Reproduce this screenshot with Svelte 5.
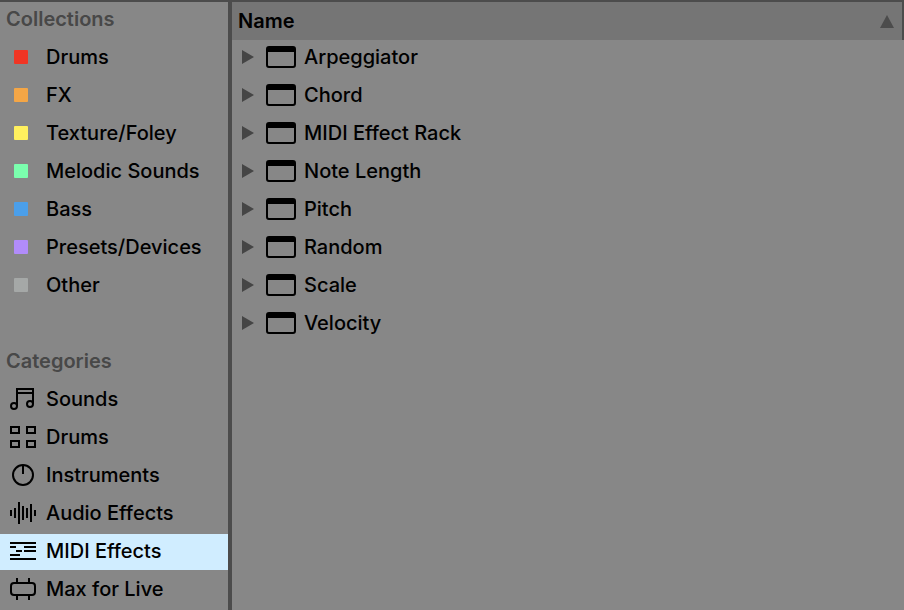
<script lang="ts">
  type Collection = { name: string; color: string };
  type Category = { name: string; shape: string };

  const collections: Collection[] = [
    { name: 'Drums', color: '#f03524' },
    { name: 'FX', color: '#f4a646' },
    { name: 'Texture/Foley', color: '#fff05e' },
    { name: 'Melodic Sounds', color: '#7bffae' },
    { name: 'Bass', color: '#4b9fea' },
    { name: 'Presets/Devices', color: '#b18cfa' },
    { name: 'Other', color: '#a5a8a7' }
  ];

  // stroke paths on a 26x24 grid
  const categories: Category[] = [
    {
      name: 'Sounds',
      shape: 'M7 19V2H23V17M7 6H23M7 19a3 3 0 1 1-6 0a3 3 0 1 1 6 0M23 17a3 3 0 1 1-6 0a3 3 0 1 1 6 0'
    },
    { name: 'Drums', shape: 'M1 2h8v6h-8zM17 2h8v6h-8zM1 16h8v6h-8zM17 16h8v6h-8z' },
    { name: 'Instruments', shape: 'M23 12a10 10 0 1 1-20 0a10 10 0 1 1 20 0M13 2V11' },
    { name: 'Audio Effects', shape: 'M1 9v6M5 7v10M9 1v22M13 5v14M17 7v10M21 3v18M25 9v6' },
    { name: 'MIDI Effects', shape: 'M0 4H26M0 8H6M14 8H26M6 12H12M14 12H26M0 16H10M0 20H26' },
    {
      name: 'Max for Live',
      shape: 'M4 6H22a3 3 0 0 1 3 3v6a3 3 0 0 1-3 3H4a3 3 0 0 1-3-3V9a3 3 0 0 1 3-3zM7 1v5M19 1v5M7 18v5M19 18v5'
    }
  ];

  const devices = [
    'Arpeggiator',
    'Chord',
    'MIDI Effect Rack',
    'Note Length',
    'Pitch',
    'Random',
    'Scale',
    'Velocity'
  ];

  let selected = $state('category-MIDI Effects');
  let ascending = $state(true);

  const sorted = $derived(ascending ? devices : [...devices].reverse());
</script>

<div class="browser">
  <nav class="sidebar">
    <section>
      <h2>Collections</h2>
      {#each collections as item}
        <button
          class="row"
          class:selected={selected === `collection-${item.name}`}
          onclick={() => (selected = `collection-${item.name}`)}
        >
          <span class="icon"><span class="swatch" style="background: {item.color}"></span></span>
          {item.name}
        </button>
      {/each}
    </section>

    <section>
      <h2>Categories</h2>
      {#each categories as item}
        <button
          class="row"
          class:selected={selected === `category-${item.name}`}
          onclick={() => (selected = `category-${item.name}`)}
        >
          <svg class="icon" viewBox="0 0 26 24" aria-hidden="true">
            <path d={item.shape} />
          </svg>
          {item.name}
        </button>
      {/each}
    </section>
  </nav>

  <main class="content">
    <button class="header" onclick={() => (ascending = !ascending)}>
      Name
      <svg class="sort" class:flipped={!ascending} viewBox="0 0 14 13" aria-hidden="true">
        <path d="M7 0L14 13H0z" />
      </svg>
    </button>
    <div class="devices">
      {#each sorted as device}
        <button class="row device">
          <svg class="arrow" viewBox="0 0 12 14" aria-hidden="true">
            <path d="M0 0L12 7L0 14z" />
          </svg>
          <svg class="window" viewBox="0 0 30 22" aria-hidden="true">
            <rect x="1" y="1" width="28" height="20" rx="2" />
            <path d="M1 4H29" />
          </svg>
          {device}
        </button>
      {/each}
    </div>
  </main>
</div>

<style>
  :global(body) {
    margin: 0;
    background: #878787;
  }

  .browser {
    display: flex;
    box-sizing: border-box;
    min-height: 100vh;
    border-top: 2px solid #4c4c4c;
    background: #878787;
    color: #000;
    font-family: Inter, 'Liberation Sans', sans-serif;
    font-size: 20px;
    font-weight: 500;
    line-height: 24px;
  }

  .sidebar {
    display: flex;
    flex-direction: column;
    flex: none;
    gap: 40px;
    width: 228px;
    border-right: 4px solid #4c4c4c;
  }

  section,
  .devices {
    display: flex;
    flex-direction: column;
    gap: 2px;
  }

  h2 {
    box-sizing: border-box;
    height: 36px;
    margin: 0;
    padding: 5px 6px;
    color: #484848;
    font-size: 20px;
    font-weight: 600;
    line-height: 24px;
  }

  button {
    border: 0;
    background: none;
    color: inherit;
    font: inherit;
    text-align: left;
    cursor: pointer;
  }

  .row {
    display: flex;
    align-items: center;
    gap: 10px;
    box-sizing: border-box;
    width: 100%;
    height: 36px;
    padding: 0 10px 2px;
    white-space: nowrap;
  }

  .row.selected {
    background: #d0edff;
  }

  .icon {
    flex: none;
    width: 26px;
    height: 24px;
    fill: none;
    stroke: #000;
    stroke-width: 2;
  }

  .swatch {
    display: block;
    width: 14px;
    height: 14px;
    margin: 5px 4px;
    border-radius: 1px;
  }

  .content {
    flex: 1;
    min-width: 0;
  }

  .header {
    display: flex;
    align-items: center;
    justify-content: space-between;
    box-sizing: border-box;
    width: 100%;
    height: 38px;
    padding: 0 8px 0 6px;
    border-right: 2px solid #4c4c4c;
    background: #757575;
    font-weight: 600;
  }

  .sort {
    width: 14px;
    height: 13px;
    fill: #4c4c4c;
  }

  .sort.flipped {
    transform: rotate(180deg);
  }

  .device {
    gap: 8px;
  }

  .arrow {
    flex: none;
    width: 12px;
    height: 14px;
    margin-right: 4px;
    fill: #454545;
  }

  .window {
    flex: none;
    width: 30px;
    height: 22px;
    fill: none;
    stroke: #000;
    stroke-width: 2;
  }

  .window path {
    stroke-width: 4;
  }
</style>
